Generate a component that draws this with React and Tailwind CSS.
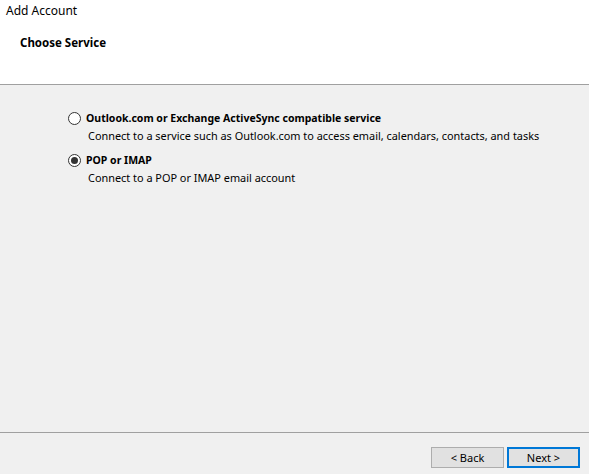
import React from 'react';

const Radio = ({ checked }) => (
  <span className="w-[13px] h-[13px] rounded-full border border-[#333] bg-white flex items-center justify-center shrink-0">
    {checked && <span className="w-[7px] h-[7px] rounded-full bg-[#333]" />}
  </span>
);

const options = [
  {
    label: 'Outlook.com or Exchange ActiveSync compatible service',
    desc: 'Connect to a service such as Outlook.com to access email, calendars, contacts, and tasks',
    checked: false
  },
  {
    label: 'POP or IMAP',
    desc: 'Connect to a POP or IMAP email account',
    checked: true
  }
];

export default function App() {
  return (
    <div className="w-[589px] h-[474px] flex flex-col bg-[#f0f0f0] text-[11px] text-black overflow-hidden" style={{ fontFamily: '"Noto Sans", "Open Sans", sans-serif' }}>
      <div className="h-[85px] bg-white border-b border-[#a0a0a0] shrink-0">
        <div className="pl-[6px] pt-[3px] leading-4 text-[12px]">Add Account</div>
        <div className="pl-[20px] pt-[16px] leading-4 font-bold text-[11.5px]">Choose Service</div>
      </div>
      <div className="flex-1 pl-[68px] pt-[25px]">
        {options.map((o, i) => (
          <div key={i} className={i > 0 ? 'mt-[8px]' : ''}>
            <div className="flex items-center gap-[5px] h-[16px]">
              <Radio checked={o.checked} />
              <span className="font-bold leading-4 text-[10.5px]">{o.label}</span>
            </div>
            <div className="pl-[20px] mt-[2px] leading-4 text-[10.9px]">{o.desc}</div>
          </div>
        ))}
      </div>
      <div className="h-[42px] border-t border-[#a0a0a0] shrink-0 flex justify-end items-start pt-[14px] pr-[9px] gap-[3px]">
        <button className="w-[73px] h-[21px] bg-[#e1e1e1] border border-[#adadad] leading-4">&lt; Back</button>
        <button className="w-[73px] h-[21px] bg-[#e1e1e1] border-2 border-[#0078d7] leading-4">Next &gt;</button>
      </div>
    </div>
  );
}
